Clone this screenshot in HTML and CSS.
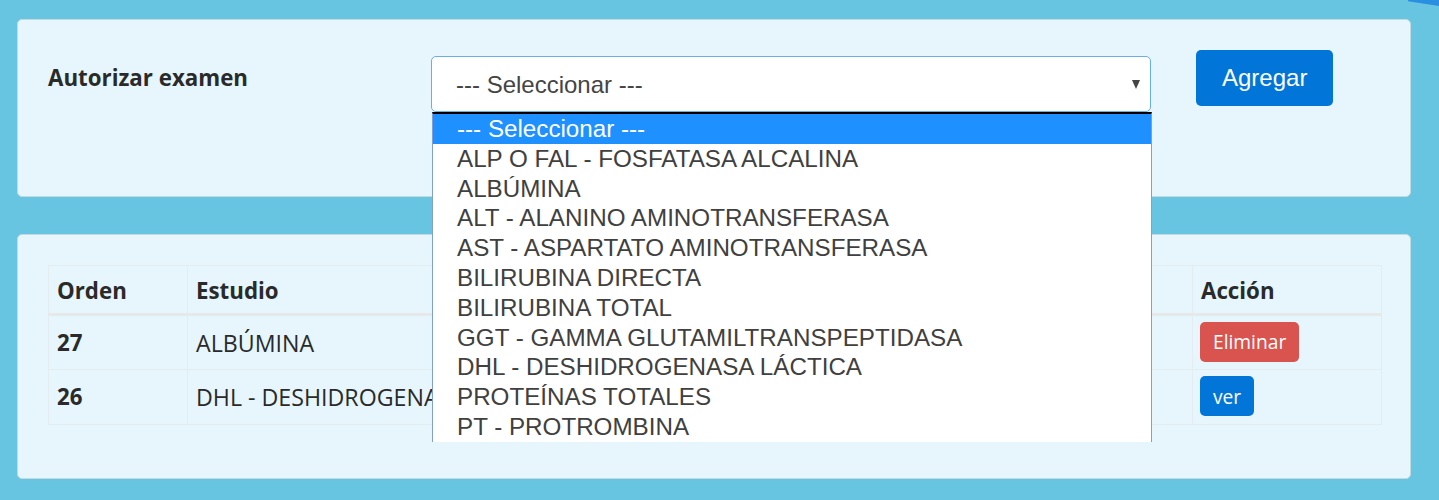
FILE: index.html
```html
<!DOCTYPE html>
<html lang="es">
<head>
<meta charset="utf-8">
<title>Autorizar examen</title>
<link rel="stylesheet" href="styles.css">
</head>
<body>
<div class="corner-deco"></div>
<main class="page">
  <section class="card card-form">
    <div class="form-row">
      <label class="form-label">Autorizar examen</label>
      <div class="select-wrap">
        <div class="select-box">
          <span class="select-value">--- Seleccionar ---</span>
          <span class="select-arrow"></span>
        </div>
        <ul class="select-list">
          <li class="opt opt-active">--- Seleccionar ---</li>
          <li class="opt">ALP O FAL - FOSFATASA ALCALINA</li>
          <li class="opt">ALBÚMINA</li>
          <li class="opt">ALT - ALANINO AMINOTRANSFERASA</li>
          <li class="opt">AST - ASPARTATO AMINOTRANSFERASA</li>
          <li class="opt">BILIRUBINA DIRECTA</li>
          <li class="opt">BILIRUBINA TOTAL</li>
          <li class="opt">GGT - GAMMA GLUTAMILTRANSPEPTIDASA</li>
          <li class="opt">DHL - DESHIDROGENASA LÁCTICA</li>
          <li class="opt">PROTEÍNAS TOTALES</li>
          <li class="opt">PT - PROTROMBINA</li>
        </ul>
      </div>
      <button class="btn btn-add">Agregar</button>
    </div>
  </section>

  <section class="card card-table">
    <table class="table">
      <colgroup>
        <col class="col-orden">
        <col class="col-estudio">
        <col class="col-fecha">
        <col class="col-accion">
      </colgroup>
      <thead>
        <tr>
          <th>Orden</th>
          <th>Estudio</th>
          <th></th>
          <th>Acción</th>
        </tr>
      </thead>
      <tbody>
        <tr>
          <th>27</th>
          <td>ALBÚMINA</td>
          <td></td>
          <td class="cell-action"><button class="btn btn-sm btn-danger">Eliminar</button></td>
        </tr>
        <tr>
          <th>26</th>
          <td>DHL - DESHIDROGENASA LÁCTICA</td>
          <td></td>
          <td class="cell-action"><button class="btn btn-sm btn-primary">ver</button></td>
        </tr>
      </tbody>
    </table>
  </section>
</main>
</body>
</html>
```

FILE: styles.css
```css
* { box-sizing: border-box; }

html, body {
  margin: 0;
  height: 500px;
  overflow: hidden;
}

body {
  background: #68c5e1;
  font-family: "Open Sans", "Noto Sans", sans-serif;
  color: #2a2a2a;
  position: relative;
}

.corner-deco {
  position: absolute;
  top: 0;
  right: 0;
  width: 31px;
  height: 6px;
  background: #2a8fe0;
  clip-path: polygon(0 0, 100% 0, 100% 100%, 0 20%);
}

.page {
  padding: 19px 28px 0 17px;
  display: flex;
  flex-direction: column;
  gap: 37px;
}

.card {
  background: #e7f6fc;
  border: 1px solid #c3d9e2;
  border-radius: 5px;
}

.card-form {
  height: 178px;
  padding: 30px 30px 0 30px;
}

.form-row {
  display: flex;
  align-items: flex-start;
}

.form-label {
  width: 383px;
  flex: none;
  font-weight: 700;
  font-size: 22.3px;
  line-height: 30px;
  margin-top: 13px;
  color: #2a2a2a;
}

.select-wrap {
  position: relative;
  width: 720px;
  flex: none;
  margin-top: 6px;
  z-index: 2;
}

.select-box {
  height: 56px;
  background: #fff;
  border: 1px solid #66afe9;
  border-radius: 5px;
  display: flex;
  align-items: center;
  padding-left: 24px;
  padding-top: 2px;
  position: relative;
}

.select-value {
  font-family: "Liberation Sans", Arial, sans-serif;
  font-size: 24px;
  color: #444;
}

.select-arrow {
  position: absolute;
  right: 10px;
  top: 23px;
  width: 0;
  height: 0;
  border-left: 4.5px solid transparent;
  border-right: 4.5px solid transparent;
  border-top: 9px solid #444;
}

.select-list {
  position: absolute;
  left: 1px;
  top: 56px;
  width: 720px;
  margin: 0;
  padding: 0;
  list-style: none;
  background: #fff;
  border-top: 2px solid #000;
  border-left: 1px solid #7f9fd6;
  border-right: 1px solid #7f9fd6;
  height: 330px;
  overflow: hidden;
}

.opt {
  font-family: "Liberation Sans", Arial, sans-serif;
  font-size: 24.2px;
  line-height: 29.8px;
  height: 29.8px;
  padding-left: 24px;
  color: #404040;
  white-space: nowrap;
}

.opt-active {
  background: #1e90ff;
  color: #fff;
}

.btn {
  border: 1px solid transparent;
  border-radius: 5px;
  color: #fff;
  cursor: pointer;
}

.btn-add {
  margin-left: 45px;
  height: 56px;
  padding: 0 25px;
  background: #0275d8;
  font-family: "Liberation Sans", Arial, sans-serif;
  font-size: 24px;
}

.card-table {
  height: 245px;
  padding: 30px;
}

.table {
  width: 1333px;
  border-collapse: collapse;
  table-layout: fixed;
  font-size: 23.2px;
}

.col-orden { width: 139px; }
.col-estudio { width: 520px; }
.col-fecha { width: 485px; }
.col-accion { width: 189px; }

.table th,
.table td {
  border: 1px solid #e3ecef;
  padding: 0 8px;
  text-align: left;
  vertical-align: middle;
  white-space: nowrap;
  overflow: hidden;
  color: #2a2a2a;
  line-height: 30px;
}

.table thead th {
  height: 49px;
  font-size: 22.3px;
  font-weight: 700;
  padding-top: 2px;
  border-bottom: 3px solid #e6e9ea;
}

.table tbody td {
  height: 55px;
  font-weight: 400;
}

.table tbody th {
  height: 55px;
  font-size: 22.3px;
  font-weight: 700;
}

.table td.cell-action {
  padding-left: 7px;
  padding-bottom: 2px;
}

.btn-sm {
  height: 40px;
  padding: 0 12px;
  font-family: "Open Sans", "Noto Sans", sans-serif;
  font-size: 19.2px;
  display: block;
}

.btn-danger { background: #d9534f; }
.btn-primary { background: #0275d8; }
```
